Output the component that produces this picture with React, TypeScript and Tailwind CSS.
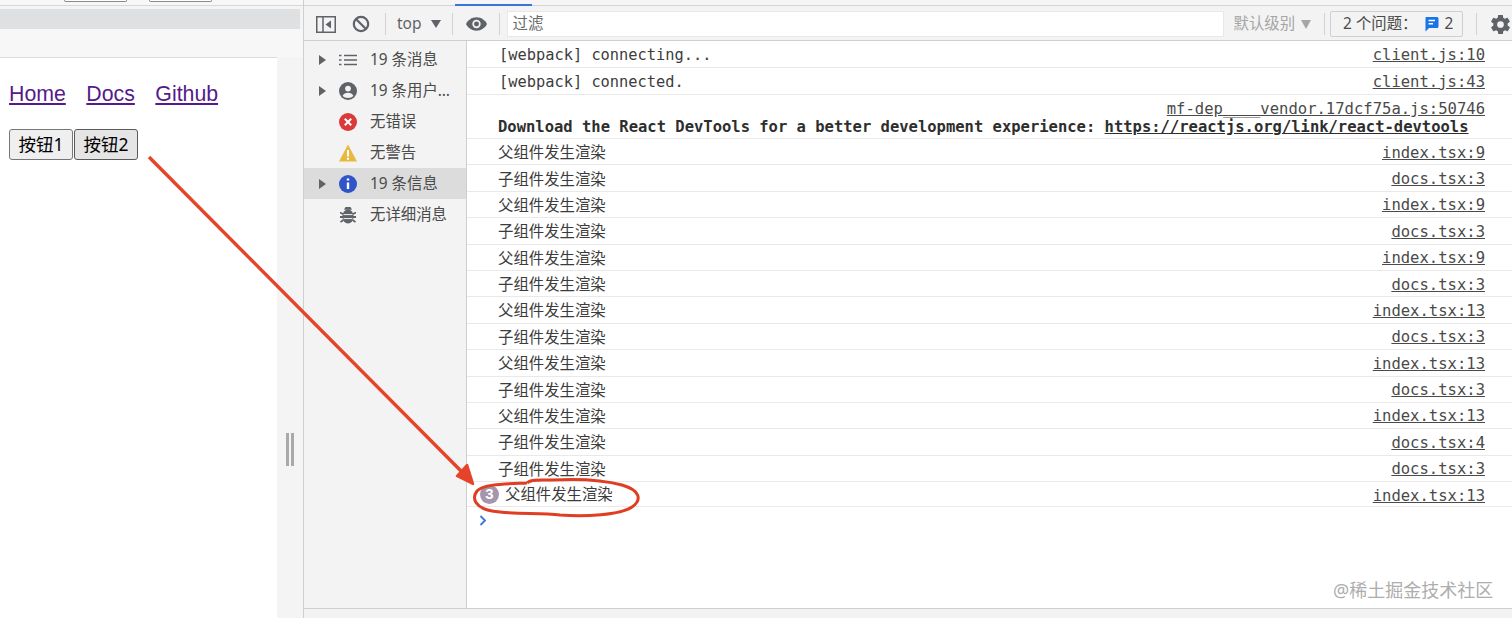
import React from "react";

const mono = "font-['DejaVu_Sans_Mono','Liberation_Mono',monospace]";
const cjk = "font-['Noto_Sans','Noto_Sans_CJK_SC',sans-serif]";

type RowData = { text: string; src: string };
const rows: RowData[] = [
  { text: "父组件发生渲染", src: "index.tsx:9" },
  { text: "子组件发生渲染", src: "docs.tsx:3" },
  { text: "父组件发生渲染", src: "index.tsx:9" },
  { text: "子组件发生渲染", src: "docs.tsx:3" },
  { text: "父组件发生渲染", src: "index.tsx:9" },
  { text: "子组件发生渲染", src: "docs.tsx:3" },
  { text: "父组件发生渲染", src: "index.tsx:13" },
  { text: "子组件发生渲染", src: "docs.tsx:3" },
  { text: "父组件发生渲染", src: "index.tsx:13" },
  { text: "子组件发生渲染", src: "docs.tsx:3" },
  { text: "父组件发生渲染", src: "index.tsx:13" },
  { text: "子组件发生渲染", src: "docs.tsx:4" },
  { text: "子组件发生渲染", src: "docs.tsx:3" },
];

function Src({ children, className = "" }: { children: React.ReactNode; className?: string }) {
  return <span className={`${mono} text-[15.55px] text-[#4a4a4a] underline ${className}`}>{children}</span>;
}

function Tri() {
  return <span className="w-0 h-0 border-y-[5px] border-y-transparent border-l-[7px] border-l-[#5f6368]" />;
}

function SideRow({ arrow, icon, label, active }: { arrow?: boolean; icon: React.ReactNode; label: string; active?: boolean }) {
  return (
    <div className={`h-[31px] flex items-center ${active ? "bg-[#dcdcdc]" : ""}`}>
      <div className="w-[35px] pl-[15px] flex items-center">{arrow && <Tri />}</div>
      <div className="w-[18px] h-[18px] flex items-center justify-center">{icon}</div>
      <span className={`${cjk} ml-[13px] text-[15.4px] text-[#4b4b4b] whitespace-nowrap`}>{label}</span>
    </div>
  );
}

function Sep() {
  return <div className="w-px h-[22px] bg-[#d2d2d2]" />;
}

export default function App() {
  return (
    <div className="relative w-[1512px] h-[618px] overflow-hidden bg-white flex font-['Liberation_Sans',sans-serif]">
      {/* Left: browser page */}
      <div className="w-[304px] shrink-0 h-full flex flex-col bg-[#f4f4f4] border-r border-[#cfcfcf]">
        <div className="h-[6px] bg-[#f7f7f7] border-b border-[#d8d8d8] flex pl-[64px] gap-[22px]">
          <div className="w-[63px] h-[2px] border-b border-x border-[#8a8a8a] bg-white rounded-b-sm" />
          <div className="w-[63px] h-[2px] border-b border-x border-[#8a8a8a] bg-white rounded-b-sm" />
        </div>
        <div className="h-[3px]" />
        <div className="h-[20px] bg-[#dfe0e2] mr-[3px]" />
        <div className="h-[28px] bg-[#f7f7f7]" />
        <div className="flex-1 flex">
          <div className="w-[277px] bg-white border-t border-[#dcdcdc] pl-[9px] pt-[20px]">
            <div className="flex gap-[20.5px] text-[21.3px] leading-[32px] text-[#551a8b]">
              <a className="underline">Home</a>
              <a className="underline">Docs</a>
              <a className="underline">Github</a>
            </div>
            <div className="flex mt-[19px]">
              <button className={`${cjk} w-[64px] h-[31px] bg-[#efefef] border border-[#767676] rounded-[3px] text-[17.5px] text-black leading-none`}>按钮1</button>
              <button className={`${cjk} ml-[1px] w-[64px] h-[31px] bg-[#e5e5e5] border border-[#5a5a5a] rounded-[3px] text-[17.5px] text-black leading-none`}>按钮2</button>
            </div>
          </div>
          <div className="flex-1 flex items-center justify-center gap-[2px] pt-[376px] pb-[152px] bg-[#f4f4f4]">
            <div className="w-[3px] h-full bg-[#a9a9a9]" />
            <div className="w-[3px] h-full bg-[#a9a9a9]" />
          </div>
        </div>
      </div>

      {/* Right: devtools */}
      <div className="flex-1 min-w-0 overflow-hidden flex flex-col bg-white">
        <div className="h-[6px] bg-[#f5f5f5] border-b border-[#d4d4d4] pl-[151px]">
          <div className="w-[77px] h-[6px] border-b-2 border-[#3a74d8]" />
        </div>
        <div className="h-[35px] pt-[2px] bg-[#f3f3f3] border-b border-[#cfcfcf] flex items-center">
          <svg width="20" height="17" viewBox="0 0 20 17" className="ml-[12px] shrink-0">
            <rect x="0.75" y="0.75" width="18.5" height="15.5" fill="none" stroke="#5f6368" strokeWidth="1.5" />
            <path d="M7 1v15" stroke="#5f6368" strokeWidth="1.5" />
            <path d="M15 4.5v8l-5.5-4z" fill="#5f6368" />
          </svg>
          <svg width="18" height="18" viewBox="0 0 18 18" className="ml-[16px] shrink-0">
            <circle cx="9" cy="9" r="7.2" fill="none" stroke="#5f6368" strokeWidth="2.2" />
            <path d="M4 4l10 10" stroke="#5f6368" strokeWidth="2.2" />
          </svg>
          <div className="ml-[15px]"><Sep /></div>
          <span className={`${cjk} ml-[11px] text-[15.5px] text-[#5f6368]`}>top</span>
          <span className="ml-[9px] w-0 h-0 border-x-[5px] border-x-transparent border-t-[8px] border-t-[#5f6368]" />
          <div className="ml-[11px]"><Sep /></div>
          <svg width="21" height="14" viewBox="0 0 22 14" className="ml-[13px] shrink-0">
            <path d="M11 0C6 0 2 3 0 7c2 4 6 7 11 7s9-3 11-7c-2-4-6-7-11-7z" fill="#5f6368" />
            <circle cx="11" cy="7" r="4.4" fill="#f3f3f3" />
            <circle cx="11" cy="7" r="2.6" fill="#5f6368" />
          </svg>
          <div className="ml-[12px]"><Sep /></div>
          <div className={`${cjk} ml-[7px] w-[717px] shrink-0 h-[26px] bg-white border border-[#e8e8e8] flex items-center pl-[5px] text-[15.4px] text-[#6b6b6b]`}>过滤</div>
          <span className={`${cjk} ml-[10px] text-[15.4px] text-[#a6a6a6] whitespace-nowrap`}>默认级别</span>
          <span className="ml-[6px] w-0 h-0 border-x-[5.5px] border-x-transparent border-t-[9px] border-t-[#a6a6a6]" />
          <div className="ml-[13px]"><Sep /></div>
          <div className={`${cjk} ml-[5px] w-[133px] shrink-0 h-[26px] border border-[#cfcfcf] rounded-[2px] flex items-center pl-[12px] text-[15.4px] text-[#4b4b4b] whitespace-nowrap`}>
            <span>2 个问题：</span>
            <svg width="15" height="16" viewBox="0 0 15 16" className="ml-[7px]">
              <path d="M2 1h11a1.5 1.5 0 0 1 1.5 1.5v8A1.5 1.5 0 0 1 13 12H5l-3.5 3.5V2.5A1.5 1.5 0 0 1 2 1z" fill="#1a73e8" />
              <path d="M4.5 4.5h6.5M4.5 7.8h4.5" stroke="#fff" strokeWidth="1.4" />
            </svg>
            <span className="ml-[5px]">2</span>
          </div>
          <div className="ml-[13px]"><Sep /></div>
          <svg width="23" height="23" viewBox="0 0 24 24" className="ml-[12px] shrink-0">
            <path fill="#5f6368" d="M19.4 13c.04-.33.1-.66.1-1s-.06-.67-.1-1l2.1-1.65c.2-.15.25-.42.12-.64l-2-3.46c-.12-.22-.39-.3-.61-.22l-2.49 1c-.52-.4-1.08-.73-1.69-.98L14.5 2.4c-.04-.24-.24-.4-.5-.4h-4c-.26 0-.46.16-.5.4l-.38 2.65c-.61.25-1.17.59-1.69.98l-2.49-1c-.23-.09-.49 0-.61.22l-2 3.46c-.13.22-.07.49.12.64L4.6 11c-.04.33-.1.66-.1 1s.06.67.1 1l-2.1 1.65c-.2.15-.25.42-.12.64l2 3.46c.12.22.39.3.61.22l2.49-1c.52.4 1.08.73 1.69.98l.38 2.65c.04.24.24.4.5.4h4c.26 0 .46-.16.5-.4l.38-2.65c.61-.25 1.17-.59 1.69-.98l2.49 1c.23.09.49 0 .61-.22l2-3.46c.13-.22.07-.49-.12-.64L19.4 13zM12 15.5a3.5 3.5 0 1 1 0-7 3.5 3.5 0 0 1 0 7z" />
          </svg>
        </div>

        <div className="flex-1 flex min-h-0">
          {/* sidebar */}
          <div className="w-[163px] shrink-0 bg-[#f3f3f3] border-r border-[#cfcfcf] pt-[3px]">
            <SideRow
              arrow
              label="19 条消息"
              icon={
                <svg width="18" height="12" viewBox="0 0 18 12">
                  <path d="M5 1.5h13M5 6h13M5 10.5h13" stroke="#5f6368" strokeWidth="1.6" />
                  <path d="M0 1.5h2.5M0 6h2.5M0 10.5h2.5" stroke="#5f6368" strokeWidth="1.6" />
                </svg>
              }
            />
            <SideRow
              arrow
              label="19 条用户…"
              icon={
                <svg width="18" height="18" viewBox="0 0 18 18">
                  <circle cx="9" cy="9" r="9" fill="#5f6368" />
                  <circle cx="9" cy="6.6" r="2.9" fill="#f3f3f3" />
                  <path d="M3.6 14c.8-2.4 3-3.3 5.4-3.3s4.6.9 5.4 3.3c-1.3 1.3-3.2 2-5.4 2s-4.1-.7-5.4-2z" fill="#f3f3f3" />
                </svg>
              }
            />
            <SideRow
              label="无错误"
              icon={
                <svg width="18" height="18" viewBox="0 0 18 18">
                  <circle cx="9" cy="9" r="9" fill="#db3a3a" />
                  <path d="M5.8 5.8l6.4 6.4M12.2 5.8l-6.4 6.4" stroke="#fff" strokeWidth="2" />
                </svg>
              }
            />
            <SideRow
              label="无警告"
              icon={
                <svg width="18" height="18" viewBox="0 0 18 18">
                  <path d="M9 0.5L18 17.5H0z" fill="#e9b93f" />
                  <path d="M9 6v6.5M9 13.8v2" stroke="#fff" strokeWidth="2" />
                </svg>
              }
            />
            <SideRow
              arrow
              active
              label="19 条信息"
              icon={
                <svg width="18" height="18" viewBox="0 0 18 18">
                  <circle cx="9" cy="9" r="9" fill="#2f55c9" />
                  <path d="M9 7.5v6.5M9 3.6v2" stroke="#fff" strokeWidth="2.4" />
                </svg>
              }
            />
            <SideRow
              label="无详细消息"
              icon={
                <svg width="16" height="18" viewBox="0 0 16 18">
                  <ellipse cx="8" cy="10.5" rx="5.6" ry="7" fill="#5f6368" />
                  <path d="M4 3.8h8L10.5 1h-5z" fill="#5f6368" />
                  <path d="M0 6.5l3 1.5M16 6.5l-3 1.5M0 11h3M16 11h-3M0.5 16l3-2M15.5 16l-3-2" stroke="#5f6368" strokeWidth="1.8" />
                  <path d="M3.5 8.6h9M3.5 12.6h9" stroke="#f3f3f3" strokeWidth="1" />
                </svg>
              }
            />
          </div>

          {/* console */}
          <div className="flex-1 min-w-0 bg-white relative">
            <div className={`h-[27px] pt-[3px] border-b border-[#e9e9e9] flex items-center justify-between pl-[32px] pr-[27px] ${mono} text-[15.35px] text-[#3c3c3c]`}>
              <span>[webpack] connecting...</span>
              <Src>client.js:10</Src>
            </div>
            <div className={`h-[27px] pt-[3px] border-b border-[#e9e9e9] flex items-center justify-between pl-[32px] pr-[27px] ${mono} text-[15.35px] text-[#3c3c3c]`}>
              <span>[webpack] connected.</span>
              <Src>client.js:43</Src>
            </div>
            <div className={`h-[44px] border-b border-[#e9e9e9] pl-[31px] pr-[27px] ${mono} text-[15.5px] text-[#2e2e2e]`}>
              <div className="text-right leading-[18px] pt-[5px]">
                <Src>mf-dep____vendor.17dcf75a.js:50746</Src>
              </div>
              <div className="font-bold leading-[18px] whitespace-nowrap">
                Download the React DevTools for a better development experience: <span className="underline">https://reactjs.org/link/react-devtools</span>
              </div>
            </div>
            {rows.map((r, i) => (
              <div key={i} className={`h-[26.4px] pt-[2px] border-b border-[#e9e9e9] flex items-center justify-between pl-[31px] pr-[27px]`}>
                <span className={`${cjk} text-[15.4px] text-[#3c3c3c]`}>{r.text}</span>
                <Src className="mt-[1px]">{r.src}</Src>
              </div>
            ))}
            <div className="h-[25px] border-b border-[#e9e9e9] flex items-center justify-between pl-[13px] pr-[27px]">
              <div className="flex items-center">
                <span className="w-[19px] h-[19px] rounded-full bg-[#a596ad] text-white text-[15px] font-bold flex items-center justify-center">3</span>
                <span className={`${cjk} ml-[6px] text-[15.4px] text-[#3c3c3c]`}>父组件发生渲染</span>
              </div>
              <Src className="mt-[5px]">index.tsx:13</Src>
            </div>
            <svg width="8" height="11" viewBox="0 0 8 11" className="ml-[12px] mt-[8px]">
              <path d="M1.5 1l4.5 4.5L1.5 10" fill="none" stroke="#3a74d8" strokeWidth="1.8" />
            </svg>
          </div>
        </div>
        <div className="h-[10px] bg-[#f3f3f3] border-t border-[#cfcfcf]" />
      </div>

      {/* Annotations over the screenshot */}
      <svg className="absolute left-0 top-0 pointer-events-none" width="1512" height="618" viewBox="0 0 1512 618">
        <path d="M149 157L462 472" stroke="#e5432a" strokeWidth="3.4" fill="none" />
        <path d="M473 484L457 476L467 465z" fill="#e5432a" stroke="#e5432a" strokeWidth="2.5" strokeLinejoin="round" />
        <path
          d="M527 483C505 484 483 484 477 491C471 499 476 508 492 511C515 515 540 512 560 515C585 517 620 515 632 507C643 499 639 490 622 485C600 479 570 479 552 480C540 480 530 479 527 483"
          fill="none"
          stroke="#e03e22"
          strokeWidth="3"
        />
      </svg>
      <div className={`${cjk} absolute left-[1333px] top-[578px] text-[18px] leading-[24px] text-[#adadad] whitespace-nowrap`}>@稀土掘金技术社区</div>
    </div>
  );
}
